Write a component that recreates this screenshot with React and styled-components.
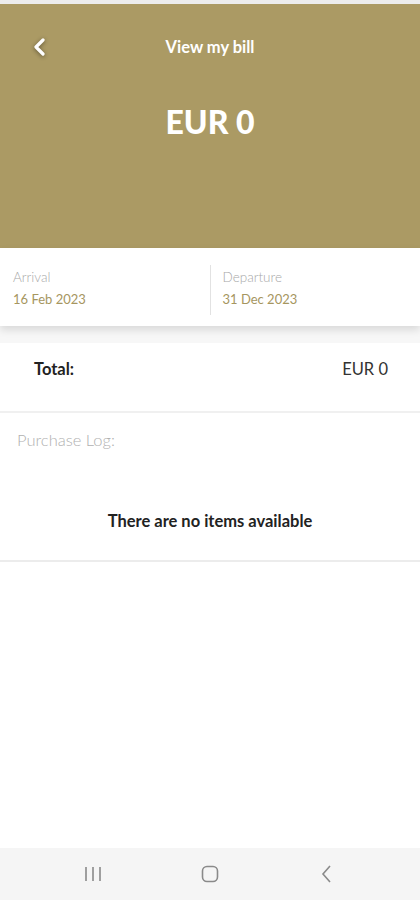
import styled, { createGlobalStyle } from "styled-components";

const Global = createGlobalStyle`
    html, body {
        margin: 0;
        padding: 0;
        background: #fff;
        font-family: Lato, "Open Sans", "Liberation Sans", sans-serif;
    }
`;

const Page = styled.div`
    width: 420px;
    height: 900px;
    display: flex;
    flex-direction: column;
    background: #fff;
    border-top: 4px solid #ececec;
    box-sizing: border-box;
`;

const Header = styled.div`
    background-color: #ab9a64;
    height: 244px;
    display: flex;
    flex-direction: column;
    align-items: center;
    color: #fff;
`;

const TopBar = styled.div`
    width: 100%;
    height: 86px;
    display: grid;
    grid-template-columns: 80px 1fr 80px;
    align-items: center;
`;

const BackBtn = styled.button`
    background: none;
    border: 0;
    padding: 0 0 0 32px;
    display: flex;
    align-items: center;
    color: #fff;
    filter: drop-shadow(0 1px 2px rgba(0,0,0,0.45));
`;

const Title = styled.h1`
    margin: 0;
    font-size: 16.5px;
    font-weight: bold;
    text-align: center;
`;

const Amount = styled.div`
    margin-top: 12px;
    font-size: 32px;
    font-weight: 900;
`;

const DateCard = styled.div`
    display: grid;
    grid-template-columns: 1fr 1px 1fr;
    align-items: center;
    background: #fff;
    height: 78px;
    box-shadow: 0 4px 8px rgba(0,0,0,0.12);
    position: relative;
    z-index: 1;
`;

const DateCol = styled.div`
    padding-left: ${p => p.left}px;
    padding-top: 2px;
`;

const Sep = styled.div`
    width: 1px;
    height: 50px;
    background: #e2e2e2;
    margin-top: 6px;
`;

const DateLabel = styled.div`
    font-size: 13.5px;
    font-weight: 300;
    color: #a8a8a8;
`;

const DateValue = styled.div`
    margin-top: 6px;
    font-size: 13px;
    color: #a6965f;
`;

const Spacer = styled.div`
    height: 17px;
    background: #f7f7f7;
`;

const TotalRow = styled.div`
    display: flex;
    justify-content: space-between;
    align-items: center;
    height: 52px;
    padding: 0 32px 16px 34px;
    border-bottom: 2px solid #f0f0f0;
    font-size: 16.5px;
    color: #333;
`;

const TotalLabel = styled.span`
    font-weight: bold;
    color: #222;
`;

const Section = styled.div`
    padding: 17px 17px 0;
    height: 149px;
    box-sizing: border-box;
    border-bottom: 2px solid #ececec;
`;

const LogTitle = styled.div`
    font-size: 16.5px;
    font-weight: 300;
    color: #b0b0b0;
`;

const Empty = styled.div`
    margin-top: 61px;
    text-align: center;
    font-size: 16.5px;
    font-weight: bold;
    color: #222;
`;

const Fill = styled.div`
    flex: 1;
`;

const NavBar = styled.div`
    height: 52px;
    background: #f5f5f5;
    display: flex;
    align-items: center;
    justify-content: center;
    gap: 97px;
`;

export default function App() {
    return (
        <>
            <Global />
            <Page>
                <Header>
                    <TopBar>
                        <BackBtn>
                            <svg width="16" height="20" viewBox="0 0 16 20">
                                <path d="M11 3 L4 10 L11 17" fill="none" stroke="#fff" strokeWidth="3.2" strokeLinecap="round" strokeLinejoin="round" />
                            </svg>
                        </BackBtn>
                        <Title>View my bill</Title>
                        <div />
                    </TopBar>
                    <Amount>EUR 0</Amount>
                </Header>
                <DateCard>
                    <DateCol left={13}>
                        <DateLabel>Arrival</DateLabel>
                        <DateValue>16 Feb 2023</DateValue>
                    </DateCol>
                    <Sep />
                    <DateCol left={12}>
                        <DateLabel>Departure</DateLabel>
                        <DateValue>31 Dec 2023</DateValue>
                    </DateCol>
                </DateCard>
                <Spacer />
                <TotalRow>
                    <TotalLabel>Total:</TotalLabel>
                    <span>EUR 0</span>
                </TotalRow>
                <Section>
                    <LogTitle>Purchase Log:</LogTitle>
                    <Empty>There are no items available</Empty>
                </Section>
                <Fill />
                <NavBar>
                    <svg width="20" height="20" viewBox="0 0 20 20">
                        <path d="M3 3 V17 M10 3 V17 M17 3 V17" stroke="#8a8a8a" strokeWidth="1.6" />
                    </svg>
                    <svg width="20" height="20" viewBox="0 0 20 20">
                        <rect x="2.5" y="2.5" width="15" height="15" rx="4.5" fill="none" stroke="#8a8a8a" strokeWidth="1.6" />
                    </svg>
                    <svg width="20" height="20" viewBox="0 0 20 20">
                        <path d="M13 2 L6 10 L13 18" fill="none" stroke="#8a8a8a" strokeWidth="1.6" />
                    </svg>
                </NavBar>
            </Page>
        </>
    );
}
